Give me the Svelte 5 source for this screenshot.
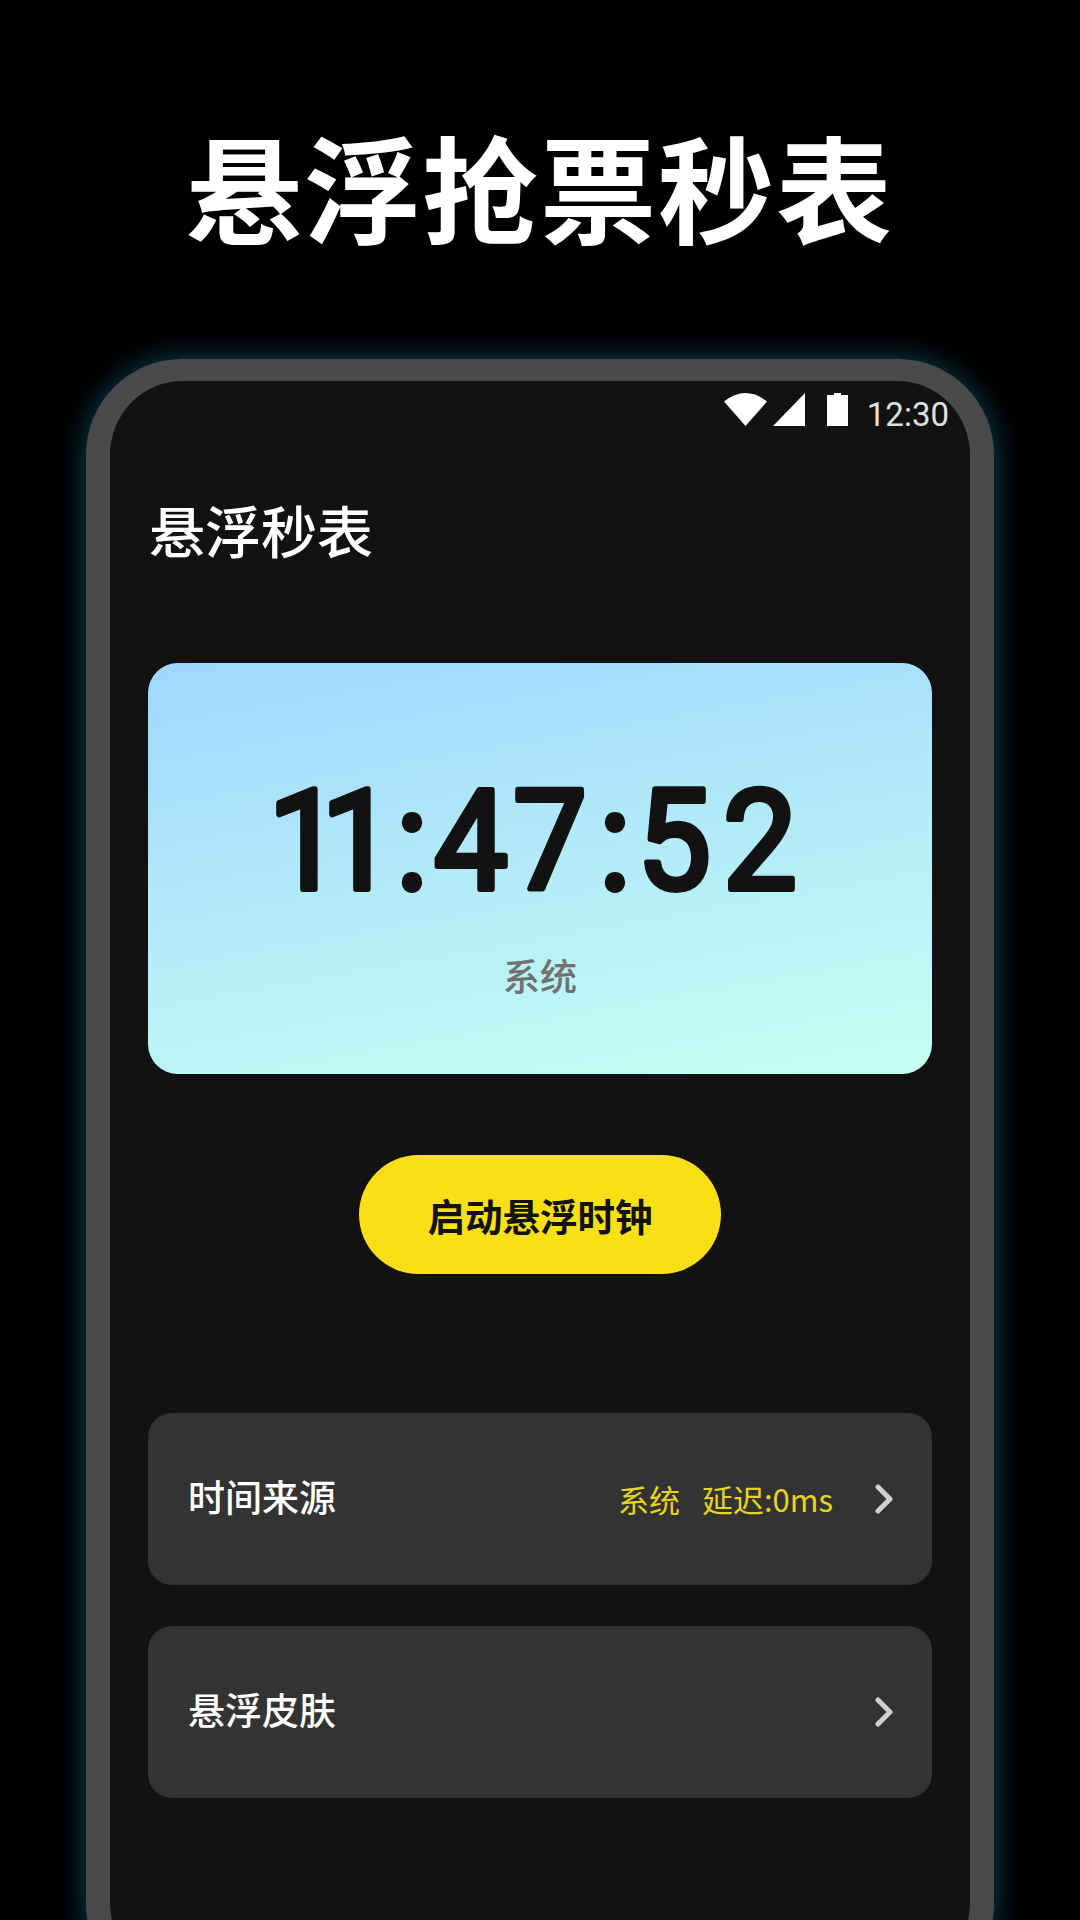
<script>
const clockScale = 0.94
const clockChars = ['1', '1', ':', '4', '7', ':', '5', '2']
const clockX = [120, 173, 248, 286, 365, 451, 489, 575].map(v => v / clockScale)

const rows = [
	{ label: '时间来源', source: '系统', delay: '延迟:0ms' },
	{ label: '悬浮皮肤' }
]
</script>

<div class="page">
	<h1 class="hero">悬浮抢票秒表</h1>

	<div class="phone">
		<div class="statusbar">
			<svg class="wifi" viewBox="0 0 43 33">
				<path d="M21.5 33 L0 8.5 Q21.5 -8.5 43 8.5 Z" />
			</svg>
			<svg class="signal" viewBox="0 0 32 33">
				<path d="M32 0 V33 H0 Z" />
			</svg>
			<svg class="battery" viewBox="0 0 21 33">
				<path d="M0 2 H7 V0 H14 V2 H21 V33 H0 Z" />
			</svg>
			<span class="time">12:30</span>
		</div>

		<div class="content">
			<div class="title">悬浮秒表</div>

			<div class="clock-card">
				<svg class="clock" viewBox="0 0 784 190">
					<text
						x={clockX.join(' ')}
						y="150"
						transform="scale({clockScale} 1)"
					>{clockChars.join('')}</text>
				</svg>
				<div class="clock-source">系统</div>
			</div>

			<button class="start">启动悬浮时钟</button>

			<div class="rows">
				{#each rows as row}
					<div class="row">
						<span class="row-label">{row.label}</span>
						{#if row.source}
							<span class="row-value">{row.source}</span>
							<span class="row-value delay">{row.delay}</span>
						{/if}
						<svg class="chevron" viewBox="0 0 18 30">
							<path d="M3 3 L15 15 L3 27" />
						</svg>
					</div>
				{/each}
			</div>
		</div>
	</div>
</div>

<style>
:global(body) {
	background: #000;
}

.page {
	height: 1920px;
	overflow: hidden;
	background: #000;
	font-family: "Noto Sans CJK SC", "Noto Sans", sans-serif;
}

.hero {
	margin: 0;
	padding: 126px 0 117px;
	font-size: 116px;
	line-height: 116px;
	font-weight: 700;
	letter-spacing: 2px;
	text-align: center;
	color: #fff;
}

.phone {
	height: 1596px;
	margin: 0 86px;
	border-style: solid;
	border-color: #4a4a4a;
	border-width: 22px 24px;
	border-radius: 96px;
	background: #121212;
	box-shadow: 0 0 28px #0a4458;
}

.statusbar {
	display: flex;
	align-items: flex-start;
	justify-content: flex-end;
	height: 33px;
	padding: 12px 21px 0 0;
}

.statusbar svg {
	fill: #fff;
	height: 33px;
}

.wifi {
	width: 43px;
}

.signal {
	width: 32px;
	margin-left: 6px;
}

.battery {
	width: 21px;
	margin-left: 22px;
}

.time {
	margin: 5px 0 0 19px;
	font-family: Roboto, sans-serif;
	font-size: 33px;
	line-height: 33px;
	color: #e0e0e0;
}

.content {
	padding: 0 38px;
}

.title {
	margin: 68px 0 0 1px;
	font-size: 56px;
	line-height: 70px;
	font-weight: 500;
	color: #fff;
}

.clock-card {
	display: flex;
	flex-direction: column;
	align-items: center;
	height: 411px;
	margin-top: 99px;
	padding-top: 76px;
	box-sizing: border-box;
	border-radius: 30px;
	background: linear-gradient(170deg, #9fd7ff, #c6fff2);
}

.clock {
	width: 784px;
	height: 190px;
	flex-shrink: 0;
}

.clock text {
	font-family: Roboto, sans-serif;
	font-size: 140px;
	font-weight: 400;
	fill: #121212;
	stroke: #121212;
	stroke-width: 6px;
	stroke-linejoin: round;
}

.clock-source {
	margin-top: 24px;
	font-size: 37px;
	line-height: 44px;
	font-weight: 500;
	color: #717171;
}

.start {
	display: block;
	width: 362px;
	height: 119px;
	margin: 81px auto 0;
	padding: 0;
	border: 0;
	border-radius: 60px;
	background: #f8df16;
	font-family: inherit;
	font-size: 37.5px;
	font-weight: 700;
	color: #121212;
}

.rows {
	display: flex;
	flex-direction: column;
	gap: 41px;
	margin-top: 139px;
}

.row {
	display: flex;
	align-items: center;
	height: 172px;
	padding: 0 39px 0 40px;
	border-radius: 24px;
	background: #333;
}

.row-label {
	flex: 1;
	margin-bottom: 6px;
	font-size: 37px;
	font-weight: 500;
	color: #fff;
}

.row-value {
	margin-bottom: 2px;
	font-size: 31px;
	color: #e6d420;
}

.delay {
	margin-left: 22px;
}

.chevron {
	width: 18px;
	height: 30px;
	margin-left: 42px;
	fill: none;
	stroke: #d0d0d0;
	stroke-width: 5px;
	stroke-linecap: round;
	stroke-linejoin: round;
}
</style>
